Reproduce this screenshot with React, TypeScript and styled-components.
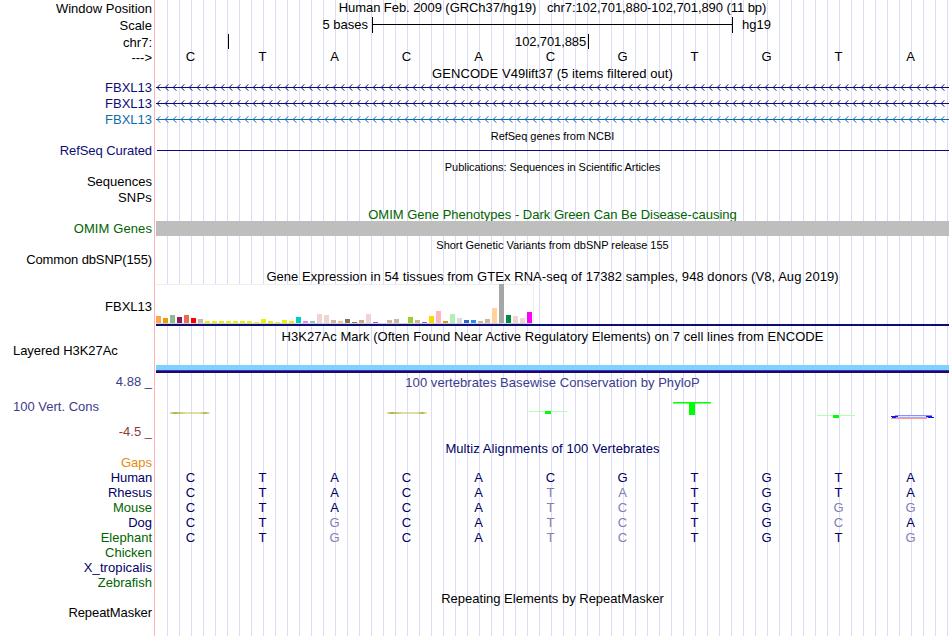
import React from "react"
import styled, { createGlobalStyle } from "styled-components"

const NAVY = "#0c0c78"
const PHYLO = "#3c3c8c"
const DEEP = "#000064"
const GREEN = "#006400"

const GlobalStyle = createGlobalStyle`
    body {
        margin: 0;
        background: #fff;
    }
`

const Browser = styled.main`
    width: 949px;
    height: 636px;
    overflow: hidden;
    font-family: "Liberation Sans", Arial, sans-serif;
    font-size: 13px;
    line-height: 15px;
    color: #000;
    white-space: pre;
    background:
        linear-gradient(#ffb4b4, #ffb4b4) 154px 0 / 1px 100% no-repeat,
        repeating-linear-gradient(to right, #dcdcf8 0 1px, transparent 1px 12px) 167px 0 / 782px 100% no-repeat;
`

const Row = styled.div<{ $height: number }>`
    display: grid;
    grid-template-columns: 156px 793px;
    height: ${p => p.$height}px;
`

const LabelCell = styled.div<{ $top?: number, $color?: string, $left?: boolean, $spacing?: number }>`
    box-sizing: border-box;
    padding: ${p => p.$top ?? 0}px 4px 0 13px;
    text-align: ${p => p.$left ? "left" : "right"};
    color: ${p => p.$color ?? "#000"};
    letter-spacing: ${p => p.$spacing ?? 0}px;
`

const Title = styled.div<{ $top?: number, $color?: string, $small?: boolean, $spacing?: number }>`
    padding-top: ${p => p.$top ?? 0}px;
    text-align: center;
    color: ${p => p.$color ?? "#000"};
    font-size: ${p => p.$small ? 11 : 13}px;
    letter-spacing: ${p => p.$spacing ?? 0}px;
`

const ScaleLine = styled.div`
    display: flex;
`

const ScaleText = styled.span<{ $width?: number, $spacing?: number }>`
    width: ${p => p.$width ? p.$width + "px" : "auto"};
    text-align: right;
    letter-spacing: ${p => p.$spacing ?? 0}px;
`

const ScaleBar = styled.div`
    box-sizing: border-box;
    width: 361px;
    height: 16px;
    margin: 0 9px 0 4px;
    border: solid #000;
    border-width: 0 1px;
    background: linear-gradient(#000, #000) 0 7px / 100% 1px no-repeat;
`

const Tick = styled.div<{ $gap: number }>`
    width: 1px;
    height: 15px;
    margin-left: ${p => p.$gap}px;
    background: #000;
`

const Bases = styled.div`
    display: grid;
    grid-template-columns: repeat(11, 72px);
    margin-left: -1.5px;
    text-align: center;
`

const Base = styled.span<{ $color: string }>`
    color: ${p => p.$color};
`

const CuratedLine = styled.div`
    height: 1px;
    margin: 7px 0 0 1px;
    background: ${NAVY};
`

const OmimBar = styled.div`
    height: 15px;
    background: #bebebe;
`

const Expression = styled.div`
    height: 42px;
    border-bottom: 2px solid ${NAVY};
    box-sizing: border-box;
`

const ExpressionBox = styled.div`
    box-sizing: border-box;
    display: flex;
    align-items: flex-end;
    gap: 2px;
    width: 378px;
    height: 40px;
    background: #fff;
    border: solid #eee;
    border-width: 1px 1px 0 0;
    box-shadow: inset 0 -1px #d2d2d2;
    padding-bottom: 1px;
`

const Tissue = styled.div<{ $height: number, $color: string }>`
    flex: none;
    width: 5px;
    height: ${p => p.$height}px;
    background: ${p => p.$color};
`

const Histone = styled.div`
    height: 8px;
    margin-top: 22px;
    background: linear-gradient(#7dd2ff 0 5px, #3c32d2 5px 6px, #1e0a5a 6px);
`

const Logo = styled.svg`
    display: block;
`

const LabelStack = styled.div`
    display: grid;
    grid-template-rows: 25px 25px;
    padding: 10px 4px 0 13px;
`

const StackLabel = styled.span<{ $color: string, $right?: boolean }>`
    color: ${p => p.$color};
    text-align: ${p => p.$right ? "right" : "left"};
`

const genes = [
    { name: "FBXL13", color: NAVY },
    { name: "FBXL13", color: NAVY },
    { name: "FBXL13", color: "#0c6caa" },
]

const tissues: [number, string][] = [
    [7, "#ffa54f"], [5, "#ee9a00"], [8, "#8fbc8f"], [6, "#8b1c62"], [8, "#ee6a50"], [5, "#ff0000"], [4, "#cdb79e"],
    [2, "#eeee00"], [2, "#eeee00"], [2, "#eeee00"], [2, "#eeee00"], [2, "#eeee00"], [2, "#eeee00"], [2, "#eeee00"],
    [1, "#eeee00"], [4, "#eeee00"], [2, "#eeee00"], [1, "#eeee00"], [3, "#eeee00"], [2, "#eeee00"],
    [6, "#00cdcd"], [2, "#ee82ee"], [2, "#9ac0cd"], [9, "#eed5d2"], [8, "#eed5d2"], [3, "#cdb79e"], [2, "#eec591"],
    [4, "#8b7355"], [1, "#8b7355"], [3, "#cdaa7d"], [9, "#eed5d2"], [1, "#b452cd"], [0, "#7a378b"], [3, "#cdb79e"],
    [4, "#cdb79e"], [0, "#cdb79e"], [6, "#9acd32"], [3, "#cdb79e"], [1, "#7a67ee"], [7, "#ffd700"], [12, "#ffb6c1"],
    [2, "#cd9b1d"], [9, "#b4eeb4"], [5, "#d9d9d9"], [3, "#3a5fcd"], [3, "#1e90ff"], [2, "#cdb79e"], [4, "#cdb79e"],
    [15, "#ffd39b"], [39, "#a6a6a6"], [8, "#008b45"], [7, "#eed5d2"], [5, "#eed5d2"], [11, "#ff00ff"],
]

// lower case letters are bases that differ from the human sequence
const alignments = [
    { name: "Human", color: DEEP, bases: "CTACACGTGTA", spacing: -0.15 },
    { name: "Rhesus", color: DEEP, bases: "CTACAtaTGTA" },
    { name: "Mouse", color: GREEN, bases: "CTACAtcTGgg" },
    { name: "Dog", color: DEEP, bases: "CTgCAtcTGcA" },
    { name: "Elephant", color: GREEN, bases: "CTgCAtcTGTg" },
    { name: "Chicken", color: GREEN, bases: "" },
    { name: "X_tropicalis", color: DEEP, bases: "", spacing: 0.08 },
    { name: "Zebrafish", color: GREEN, bases: "" },
]

const BaseRow: React.FC<{ bases: string, color: string }> = (props) => (
    <Bases>
        {props.bases.split("").map((base, i) =>
            <Base key={i} $color={base === base.toLowerCase() ? "#8080b2" : props.color}>{base.toUpperCase()}</Base>)}
    </Bases>
)

const GeneArrows: React.FC<{ color: string }> = (props) => {
    const arrows = Array.from({ length: 99 }, (_, i) => `M${i * 8 + 4.3} 4.3L${i * 8 + 1.2} 7.5L${i * 8 + 4.3} 10.7`).join("")
    return (
        <Logo width="793" height="16" fill="none" stroke={props.color}>
            <path d="M0 7.5H793" />
            <path d={arrows} />
        </Logo>
    )
}

const Conservation = () => (
    <Logo width="793" height="50">
        <defs>
            <linearGradient id="olive">
                <stop offset="0" stopColor="#b4b43c" stopOpacity="0.4" />
                <stop offset="0.12" stopColor="#b4b43c" />
                <stop offset="0.4" stopColor="#c8c86e" stopOpacity="0.6" />
                <stop offset="0.75" stopColor="#c8c86e" stopOpacity="0.6" />
                <stop offset="0.88" stopColor="#b4b43c" />
                <stop offset="1" stopColor="#b4b43c" stopOpacity="0.2" />
            </linearGradient>
        </defs>
        <rect x="14" y="23" width="40" height="2" fill="url(#olive)" />
        <rect x="231" y="23" width="40" height="2" fill="url(#olive)" />
        <path d="M373 22.5H411M661 26.5H699" stroke="#b4ffb4" />
        <path d="M389 22h6v3h-6zM677 26h6v3h-6zM533 13h6v13h-6zM517 13h38v1.6h-38z" fill="#0f0" />
        <path d="M739 26.5H776" stroke="#8c8cff" />
        <path d="M741 27.5H773" stroke="#e6e6ff" />
        <path d="M735 27.5h7M770 27.5h6M772 28.5h6M736 28.5h4" stroke="#1414e6" />
        <path d="M740 28.5H772" stroke="#aaaaff" />
        <path d="M735 29.5H771" stroke="#ff9696" />
    </Logo>
)

export default function App() {
    return (
        <Browser>
            <GlobalStyle />
            <Row $height={17}>
                <LabelCell $top={1}>Window Position</LabelCell>
                <Title $spacing={-0.065}>Human Feb. 2009 (GRCh37/hg19)   chr7:102,701,880-102,701,890 (11 bp)</Title>
            </Row>
            <Row $height={17}>
                <LabelCell $top={1}>Scale</LabelCell>
                <ScaleLine>
                    <ScaleText $width={212}>5 bases</ScaleText>
                    <ScaleBar />
                    <ScaleText>hg19</ScaleText>
                </ScaleLine>
            </Row>
            <Row $height={15}>
                <LabelCell $top={1}>chr7:</LabelCell>
                <ScaleLine>
                    <Tick $gap={72} />
                    <ScaleText $width={357} $spacing={-0.12}>102,701,885</ScaleText>
                    <Tick $gap={2} />
                </ScaleLine>
            </Row>
            <Row $height={16}>
                <LabelCell $top={1}>---&gt;</LabelCell>
                <BaseRow bases="CTACACGTGTA" color="#000" />
            </Row>
            <Row $height={15}>
                <LabelCell />
                <Title $top={1} $spacing={0.06}>GENCODE V49lift37 (5 items filtered out)</Title>
            </Row>
            {genes.map((gene, i) =>
                <Row key={i} $height={16}>
                    <LabelCell $color={gene.color}>{gene.name}</LabelCell>
                    <GeneArrows color={gene.color} />
                </Row>)}
            <Row $height={15}>
                <LabelCell />
                <Title $top={1} $small $spacing={-0.03}>RefSeq genes from NCBI</Title>
            </Row>
            <Row $height={16}>
                <LabelCell $color={NAVY} $spacing={-0.07}>RefSeq Curated</LabelCell>
                <CuratedLine />
            </Row>
            <Row $height={15}>
                <LabelCell />
                <Title $top={1} $small $spacing={-0.05}>Publications: Sequences in Scientific Articles</Title>
            </Row>
            <Row $height={16}>
                <LabelCell>Sequences</LabelCell>
            </Row>
            <Row $height={16}>
                <LabelCell $spacing={0.2}>SNPs</LabelCell>
            </Row>
            <Row $height={15}>
                <LabelCell />
                <Title $top={1} $color={GREEN}>OMIM Gene Phenotypes - Dark Green Can Be Disease-causing</Title>
            </Row>
            <Row $height={15}>
                <LabelCell $color={GREEN} $spacing={0.1}>OMIM Genes</LabelCell>
                <OmimBar />
            </Row>
            <Row $height={16}>
                <LabelCell />
                <Title $top={2} $small $spacing={-0.02}>Short Genetic Variants from dbSNP release 155</Title>
            </Row>
            <Row $height={16}>
                <LabelCell $spacing={-0.12}>Common dbSNP(155)</LabelCell>
            </Row>
            <Row $height={16}>
                <LabelCell />
                <Title $top={1} $spacing={0.055}>Gene Expression in 54 tissues from GTEx RNA-seq of 17382 samples, 948 donors (V8, Aug 2019)</Title>
            </Row>
            <Row $height={43}>
                <LabelCell $top={15}>FBXL13</LabelCell>
                <Expression>
                    <ExpressionBox>
                        {tissues.map(([height, color], i) => <Tissue key={i} $height={height} $color={color} />)}
                    </ExpressionBox>
                </Expression>
            </Row>
            <Row $height={16}>
                <LabelCell />
                <Title $top={2} $spacing={0.053}>H3K27Ac Mark (Often Found Near Active Regulatory Elements) on 7 cell lines from ENCODE</Title>
            </Row>
            <Row $height={30}>
                <LabelCell $left $spacing={-0.05}>Layered H3K27Ac</LabelCell>
                <Histone />
            </Row>
            <Row $height={16}>
                <LabelCell $top={1} $color={PHYLO}>4.88 _</LabelCell>
                <Title $top={2} $color={PHYLO} $spacing={0.05}>100 vertebrates Basewise Conservation by PhyloP</Title>
            </Row>
            <Row $height={50}>
                <LabelStack>
                    <StackLabel $color={PHYLO}>100 Vert. Cons</StackLabel>
                    <StackLabel $color="#8c3c3c" $right>-4.5 _</StackLabel>
                </LabelStack>
                <Conservation />
            </Row>
            <Row $height={16}>
                <LabelCell />
                <Title $top={2} $color={DEEP} $spacing={0.09}>Multiz Alignments of 100 Vertebrates</Title>
            </Row>
            <Row $height={15}>
                <LabelCell $color="#e68c14">Gaps</LabelCell>
            </Row>
            {alignments.map(species =>
                <Row key={species.name} $height={15}>
                    <LabelCell $color={species.color} $spacing={species.spacing}>{species.name}</LabelCell>
                    <BaseRow bases={species.bases} color={DEEP} />
                </Row>)}
            <Row $height={15}>
                <LabelCell />
                <Title $top={1}>Repeating Elements by RepeatMasker</Title>
            </Row>
            <Row $height={31}>
                <LabelCell $spacing={-0.08}>RepeatMasker</LabelCell>
            </Row>
        </Browser>
    )
}
